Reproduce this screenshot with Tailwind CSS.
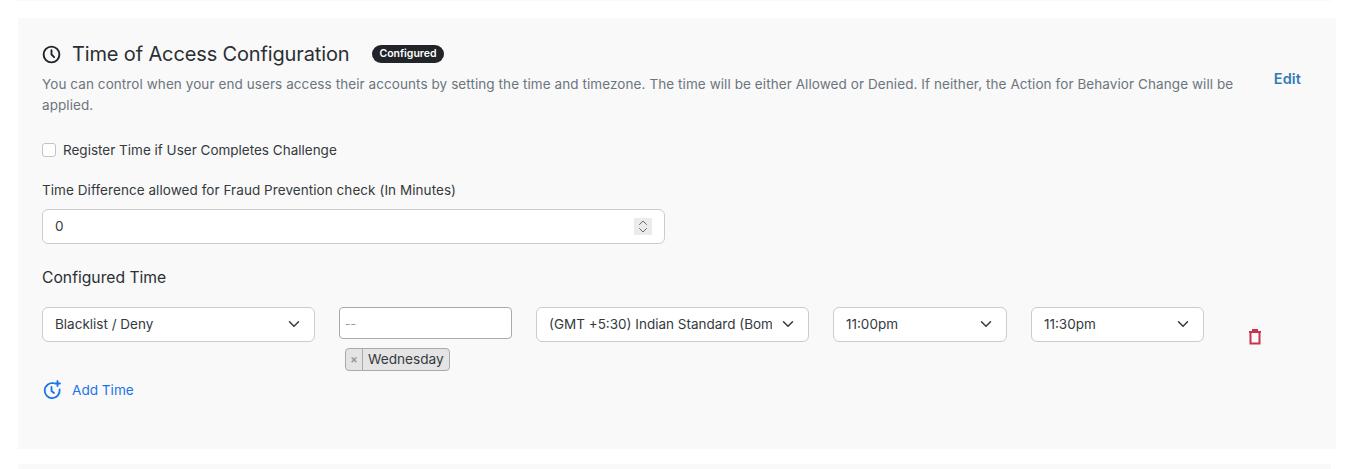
<!DOCTYPE html>
<html lang="en">
<head>
  <meta charset="UTF-8">
  <title>Time of Access Configuration</title>
  <script src="https://cdn.jsdelivr.net/npm/@tailwindcss/browser@4"></script>
</head>
<body class="bg-white font-['Inter','Liberation_Sans',sans-serif] text-[#343a40] overflow-hidden h-[469px]">
<div class="h-px mx-[18px] bg-[#f9f9f9]"></div>

<!-- card -->
<section class="mx-[13px] mt-[17px] ml-[18px] h-[431px] bg-[#f9f9f9] pl-6 pr-[35px] pt-[23px]">
  <div class="flex justify-between">
    <div class="w-[1192px]">
      <div class="flex items-center h-[26px]">
        <svg class="w-[21px] h-[21px] -ml-px text-[#212529]" viewBox="0 0 24 24" fill="none" stroke="currentColor" stroke-width="2.2" stroke-linecap="round" stroke-linejoin="round"><circle cx="12" cy="12" r="9"/><path d="M12 7v5l3 3"/></svg>
        <h2 class="ml-[10px] text-[20px] leading-[26px] font-normal tracking-[-0.14px] text-[#2b2f33]">Time of Access Configuration</h2>
        <span class="ml-[23px] h-[18px] px-[7px] rounded-full bg-[#212529] text-white text-[10.5px] leading-[18px] font-semibold">Configured</span>
      </div>
      <p class="mt-[7px] text-[13.5px] leading-[21px] tracking-[0.08px] text-[#6c757d]">You can control when your end users access their accounts by setting the time and timezone. The time will be either Allowed or Denied. If neither, the Action for Behavior Change will be applied.</p>
    </div>
    <a href="#" class="mt-[28px] -ml-[5px] text-[14.5px] leading-5 tracking-[0.1px] font-semibold text-[#337ab7]">Edit</a>
  </div>

  <label class="mt-[24px] flex items-center h-5 text-[13.5px]">
    <input type="checkbox" class="appearance-none w-[14px] h-[14px] rounded-[3px] border border-[#c4c4c4] bg-white">
    <span class="ml-[7px]">Register Time if User Completes Challenge</span>
  </label>

  <label class="block mt-5 text-[13.5px] leading-5 tracking-[0.06px]">Time Difference allowed for Fraud Prevention check (In Minutes)</label>
  <div class="relative mt-[9px] w-[623px]">
    <input type="number" value="0" class="block w-full h-[35px] px-3 pb-0.5 rounded-md border border-[#cccccc] bg-white text-[13.5px] [&::-webkit-inner-spin-button]:appearance-none">
    <div class="absolute right-[13px] top-[9px] w-[18px] h-[17px] bg-[#ebebeb]">
      <svg class="block w-[18px] h-[17px] text-[#6b6b6b]" viewBox="0 0 18 17" fill="none" stroke="currentColor" stroke-width="1" stroke-linecap="round" stroke-linejoin="round"><path d="M5.5 6.5L9 3l3.5 3.5"/><path d="M5.5 10.5L9 14l3.5-3.5"/></svg>
    </div>
  </div>

  <h3 class="mt-6 text-[15.7px] leading-5 font-normal text-[#2b2f33]">Configured Time</h3>

  <div class="mt-[19px] flex gap-6 items-start">
    <div class="relative w-[273px]">
      <select class="appearance-none w-full h-[35px] pl-3 pr-9 rounded-md border border-[#cccccc] bg-white text-[13.5px]"><option>Blacklist / Deny</option></select>
      <svg class="absolute right-[15px] top-[11px] w-3 h-3 text-[#343a40]" viewBox="0 0 16 16" fill="none" stroke="currentColor" stroke-width="2" stroke-linecap="round" stroke-linejoin="round"><path d="M2 5l6 6 6-6"/></svg>
    </div>
    <div class="w-[173px]">
      <input type="text" placeholder="--" class="block w-full h-[32px] px-[5px] rounded-[4px] border border-[#aaaaaa] bg-white text-[12px] placeholder:text-[#999999]">
      <div class="mt-[9px] ml-[6px] inline-flex h-[23px] items-stretch rounded-[4px] border border-[#aaaaaa] bg-[#e4e4e4] text-[13.65px] leading-[21px]">
        <span class="w-[17px] border-r border-[#aaaaaa] text-center text-[#999999] text-[11px] font-bold">×</span>
        <span class="px-[5px]">Wednesday</span>
      </div>
    </div>
    <div class="relative w-[273px]">
      <select class="appearance-none w-full h-[35px] pl-3 pr-9 rounded-md border border-[#cccccc] bg-white text-[13.5px]"><option>(GMT +5:30) Indian Standard (Bombay, Calcutta)</option></select>
      <svg class="absolute right-[15px] top-[11px] w-3 h-3 text-[#343a40]" viewBox="0 0 16 16" fill="none" stroke="currentColor" stroke-width="2" stroke-linecap="round" stroke-linejoin="round"><path d="M2 5l6 6 6-6"/></svg>
    </div>
    <div class="relative w-[174px]">
      <select class="appearance-none w-full h-[35px] pl-3 pr-9 rounded-md border border-[#cccccc] bg-white text-[13.5px]"><option>11:00pm</option></select>
      <svg class="absolute right-[15px] top-[11px] w-3 h-3 text-[#343a40]" viewBox="0 0 16 16" fill="none" stroke="currentColor" stroke-width="2" stroke-linecap="round" stroke-linejoin="round"><path d="M2 5l6 6 6-6"/></svg>
    </div>
    <div class="relative w-[173px]">
      <select class="appearance-none w-full h-[35px] pl-3 pr-9 rounded-md border border-[#cccccc] bg-white text-[13.5px]"><option>11:30pm</option></select>
      <svg class="absolute right-[15px] top-[11px] w-3 h-3 text-[#343a40]" viewBox="0 0 16 16" fill="none" stroke="currentColor" stroke-width="2" stroke-linecap="round" stroke-linejoin="round"><path d="M2 5l6 6 6-6"/></svg>
    </div>
    <button class="ml-[17px] mt-[20px] text-[#c8344a]">
      <svg class="block w-5 h-5" viewBox="0 0 20 20" fill="none" stroke="currentColor" stroke-width="2"><path d="M4 5h12"/><path d="M8 5V3h4v2"/><path d="M5.5 5v11.5h9V5"/></svg>
    </button>
  </div>

  <a href="#" class="mt-[9px] flex items-center h-5 text-[13.6px] text-[#1a73e8]">
    <svg class="w-5 h-5 shrink-0" viewBox="0 0 20 20" fill="none" stroke="currentColor" stroke-width="1.8" stroke-linecap="round" stroke-linejoin="round"><path d="M11.5 3.2A7.5 7.5 0 1 0 17.6 9.5"/><path d="M9.5 7v4l2.5 2"/><path d="M15.5 1v5M13 3.5h5"/></svg>
    <span class="ml-[10px]">Add Time</span>
  </a>
</section>

<div class="mt-[15px] mx-[18px] h-[5px] bg-[#f9f9f9]"></div>
</body>
</html>
